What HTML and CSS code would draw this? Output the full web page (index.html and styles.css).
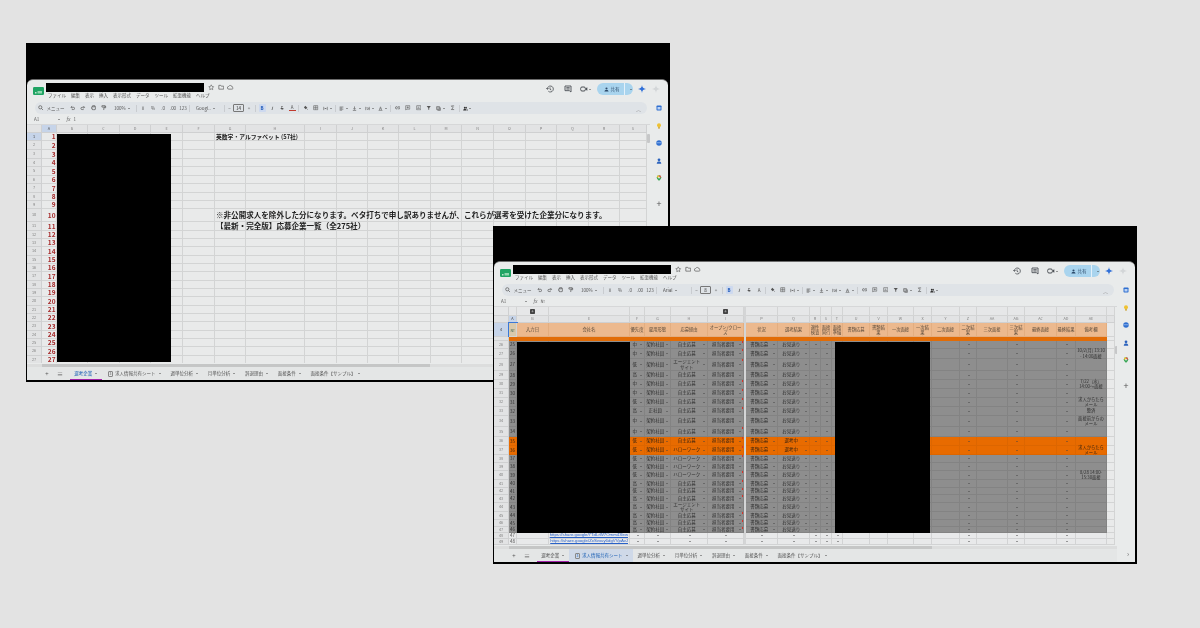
FILE: index.html
```html
<!DOCTYPE html>
<html lang="ja">
<head>
<meta charset="utf-8">
<title>応募企業一覧</title>
<link rel="stylesheet" href="styles.css">
</head>
<body>
<svg class="defs" aria-hidden="true">
  <symbol id="i-search" viewBox="0 0 24 24"><circle cx="10" cy="10" r="7" fill="none" stroke="currentColor" stroke-width="3"/><path d="M15 15l7 7" stroke="currentColor" stroke-width="3"/></symbol>
  <symbol id="i-undo" viewBox="0 0 24 24"><path d="M5 10h10a5 5 0 0 1 0 10H8M9 5l-5 5 5 5" fill="none" stroke="currentColor" stroke-width="3"/></symbol>
  <symbol id="i-redo" viewBox="0 0 24 24"><path d="M19 10H9a5 5 0 0 0 0 10h7M15 5l5 5-5 5" fill="none" stroke="currentColor" stroke-width="3"/></symbol>
  <symbol id="i-print" viewBox="0 0 24 24"><path d="M7 8V3h10v5M3 8h18v9h-4v4H7v-4H3z" fill="none" stroke="currentColor" stroke-width="3"/></symbol>
  <symbol id="i-paint" viewBox="0 0 24 24"><path d="M4 3h14v6H4zM18 6h3v6h-9v3M12 15v7" fill="none" stroke="currentColor" stroke-width="3"/></symbol>
  <symbol id="i-fill" viewBox="0 0 24 24"><path d="M10 3l9 9-7 7-8-8zM20 16c-2 3-2 5 0 5s2-2 0-5z" fill="currentColor"/></symbol>
  <symbol id="i-border" viewBox="0 0 24 24"><path d="M3 3h18v18H3zM12 3v18M3 12h18" fill="none" stroke="currentColor" stroke-width="2.5"/></symbol>
  <symbol id="i-merge" viewBox="0 0 24 24"><path d="M3 4v16M21 4v16M7 12h4M17 12h-4M9 9l3 3-3 3M15 9l-3 3 3 3" fill="none" stroke="currentColor" stroke-width="2.5"/></symbol>
  <symbol id="i-align" viewBox="0 0 24 24"><path d="M3 5h18M3 10h12M3 15h18M3 20h12" fill="none" stroke="currentColor" stroke-width="3"/></symbol>
  <symbol id="i-valign" viewBox="0 0 24 24"><path d="M12 2v14M7 11l5 5 5-5M4 21h16" fill="none" stroke="currentColor" stroke-width="3"/></symbol>
  <symbol id="i-wrap" viewBox="0 0 24 24"><path d="M3 4v16M21 4v16M6 9h9a3 3 0 0 1 0 7h-3M14 13l-3 3 3 3" fill="none" stroke="currentColor" stroke-width="2.5"/></symbol>
  <symbol id="i-rotate" viewBox="0 0 24 24"><path d="M6 20L12 4l6 16M8 14h8M3 22h18" fill="none" stroke="currentColor" stroke-width="2.5"/></symbol>
  <symbol id="i-link" viewBox="0 0 24 24"><path d="M10 7H7a5 5 0 0 0 0 10h3M14 7h3a5 5 0 0 1 0 10h-3M8 12h8" fill="none" stroke="currentColor" stroke-width="3"/></symbol>
  <symbol id="i-comment" viewBox="0 0 24 24"><path d="M3 3h18v15H8l-5 4zM12 6v9M7.500 10.500h9" fill="none" stroke="currentColor" stroke-width="2.500"/></symbol>
  <symbol id="i-chart" viewBox="0 0 24 24"><path d="M3 3h18v18H3zM8 17v-5M12 17V7M16 17v-3" fill="none" stroke="currentColor" stroke-width="2.500"/></symbol>
  <symbol id="i-filter" viewBox="0 0 24 24"><path d="M3 4h18l-7 9v8h-4v-8z" fill="currentColor"/></symbol>
  <symbol id="i-views" viewBox="0 0 24 24"><path d="M3 3h14v14H3zM21 7v14H7" fill="none" stroke="currentColor" stroke-width="3"/><path d="M6 7h8M6 12h8" stroke="currentColor" stroke-width="2"/></symbol>
  <symbol id="i-sigma" viewBox="0 0 24 24"><path d="M18 4H6l7 8-7 8h12" fill="none" stroke="currentColor" stroke-width="3"/></symbol>
  <symbol id="i-users" viewBox="0 0 24 24"><circle cx="9" cy="8" r="5"/><path d="M1 21c0-5 4-7 8-7s8 2 8 7zM15 4a4.500 4.500 0 0 1 0 9M18 14c3 1 5 3 5 7h-4"/></symbol>
  <symbol id="i-history" viewBox="0 0 24 24"><path d="M4 12a9 9 0 1 1 3 6.700M1 9l3 4 4-3M12 7v6l4 2" fill="none" stroke="currentColor" stroke-width="2.500"/></symbol>
  <symbol id="i-note" viewBox="0 0 24 24"><path d="M3 3h18v18l-5-4H3zM7 8h10M7 12h10" fill="none" stroke="currentColor" stroke-width="2.800"/></symbol>
  <symbol id="i-meet" viewBox="0 0 24 24"><rect x="2" y="6" width="14" height="12" rx="4" fill="none" stroke="currentColor" stroke-width="3"/><path d="M17 10l5-3v10l-5-3z" fill="currentColor"/></symbol>
  <symbol id="i-person" viewBox="0 0 24 24"><circle cx="12" cy="7" r="5"/><path d="M2 22c0-6 5-8 10-8s10 2 10 8z"/></symbol>
  <symbol id="i-gem" viewBox="0 0 24 24"><path d="M12 0c1 8 4 11 12 12-8 1-11 4-12 12-1-8-4-11-12-12 8-1 11-4 12-12z"/></symbol>
  <symbol id="i-star" viewBox="0 0 24 24"><path d="M12 3l3 6 6 1-4.500 4.500 1 6.500-5.500-3-5.500 3 1-6.500L3 10l6-1z" fill="none" stroke="currentColor" stroke-width="2.500"/></symbol>
  <symbol id="i-folder" viewBox="0 0 24 24"><path d="M3 5h7l2 3h9v11H3z" fill="none" stroke="currentColor" stroke-width="2.800"/></symbol>
  <symbol id="i-cloud" viewBox="0 0 24 24"><path d="M7 19a5 5 0 0 1-1-10 7 7 0 0 1 13 2 4 4 0 0 1-1 8z" fill="none" stroke="currentColor" stroke-width="2.800"/></symbol>
  <symbol id="i-cal" viewBox="0 0 24 24"><rect x="2" y="2" width="20" height="20" rx="3" fill="#2f6fd0"/><rect x="6" y="8" width="12" height="10" fill="#bcd3f5"/></symbol>
  <symbol id="i-keep" viewBox="0 0 24 24"><circle cx="12" cy="9" r="8" fill="#efc233"/><rect x="8" y="17" width="8" height="5" fill="#c9a02c"/></symbol>
  <symbol id="i-tasks" viewBox="0 0 24 24"><circle cx="12" cy="12" r="11" fill="#2f6fd0"/><path d="M2 11h20" stroke="#a9c6f2" stroke-width="3"/></symbol>
  <symbol id="i-contact" viewBox="0 0 24 24"><circle cx="12" cy="7" r="5.500" fill="#2a62bd"/><path d="M3 23c0-7 4-9 9-9s9 2 9 9z" fill="#2a62bd"/></symbol>
  <symbol id="i-map" viewBox="0 0 24 24"><path d="M12 1a9 9 0 0 1 9 9c0 6-9 13-9 13S3 16 3 10a9 9 0 0 1 9-9z" fill="#3aa757"/><path d="M12 1a9 9 0 0 1 9 9l-9 0z" fill="#e2574c"/><path d="M3 10a9 9 0 0 1 9-9v9z" fill="#f0c330"/><circle cx="12" cy="10" r="3.500" fill="#eee"/></symbol>
</svg>

<section class="win win-a">
  <div class="sheet">
    <header class="head">
      <div class="head-left">
        <svg class="logo" viewBox="0 0 22 16"><rect width="22" height="16" rx="2.500" fill="#20a464"/><path d="M9 8h9v5H9z" fill="#8fd6ae"/><path d="M4 10h3v3H4z" fill="#bfe8cf"/></svg>
        <div class="head-text">
          <div class="doc-row">
            <div class="redact doc-name"></div>
            <svg class="ic7"><use href="#i-star"/></svg>
            <svg class="ic7"><use href="#i-folder"/></svg>
            <svg class="ic7"><use href="#i-cloud"/></svg>
          </div>
          <nav class="menu"><span>ファイル</span><span>編集</span><span>表示</span><span>挿入</span><span>表示形式</span><span>データ</span><span>ツール</span><span>拡張機能</span><span>ヘルプ</span></nav>
        </div>
      </div>
      <div class="head-right">
        <svg class="ic8"><use href="#i-history"/></svg>
        <svg class="ic8 ml10"><use href="#i-note"/></svg>
        <svg class="ic8 ml8"><use href="#i-meet"/></svg><i class="caret"></i>
        <div class="share"><svg class="ic5"><use href="#i-person"/></svg><span>共有</span><b class="share-sep"></b><i class="caret"></i></div>
        <svg class="ic8 gem"><use href="#i-gem"/></svg>
        <svg class="ic8 faint"><use href="#i-gem"/></svg>
      </div>
    </header>
    <div class="body">
      <main class="app">
        <div class="toolbar">
          <svg class="t s8"><use href="#i-search"/></svg><span class="lbl">メニュー</span>
          <svg class="t ml2"><use href="#i-undo"/></svg><svg class="t"><use href="#i-redo"/></svg><svg class="t"><use href="#i-print"/></svg><svg class="t"><use href="#i-paint"/></svg>
          <span class="zoomv">100% <i class="caret"></i></span><b class="sep"></b>
          <span class="tx">¥</span><span class="tx">%</span><span class="tx">.0</span><span class="tx">.00</span><span class="tx">123</span><b class="sep"></b>
          <span class="font">Googl.. <i class="caret"></i></span><b class="sep"></b>
          <span class="tx tx8">−</span><span class="size">14</span><span class="tx">+</span><b class="sep"></b>
          <span class="tx bold">B</span><span class="tx ital">I</span><span class="tx strike">S</span><span class="tx acolor">A</span><b class="sep"></b>
          <svg class="t"><use href="#i-fill"/></svg><svg class="t"><use href="#i-border"/></svg><span class="tc"><svg class="ic5"><use href="#i-merge"/></svg><i class="caret"></i></span><b class="sep"></b>
          <span class="tc"><svg class="ic5"><use href="#i-align"/></svg><i class="caret"></i></span><span class="tc"><svg class="ic5"><use href="#i-valign"/></svg><i class="caret"></i></span><span class="tc"><svg class="ic5"><use href="#i-wrap"/></svg><i class="caret"></i></span><span class="tc"><svg class="ic5"><use href="#i-rotate"/></svg><i class="caret"></i></span><b class="sep"></b>
          <svg class="t"><use href="#i-link"/></svg><svg class="t"><use href="#i-comment"/></svg><svg class="t"><use href="#i-chart"/></svg><svg class="t"><use href="#i-filter"/></svg><span class="tc"><svg class="ic5"><use href="#i-views"/></svg><i class="caret"></i></span><svg class="t"><use href="#i-sigma"/></svg><b class="sep"></b>
          <span class="tc"><svg class="ic5 dark"><use href="#i-users"/></svg><i class="caret"></i></span>
          <span class="collapse">︿</span>
        </div>
        <div class="formula"><span class="ref">A1</span><i class="caret"></i><em>fx</em><span>1</span></div>
        <div class="grid-wrap">
          <div class="grid grid-a" id="gridA"></div>
          <div class="redact red-a"></div>
          <div class="thumb thumb-a"></div>
        </div>
        <div class="hscroll"><div class="hthumb hthumb-a"></div></div>
        <div class="tabs">
          <span class="tab-tool">+</span><span class="tab-tool tool2">≡</span>
          <span class="tab tab-on"><span>選考企業</span><i class="caret"></i></span>
          <span class="tab"><b class="badge">3</b><span>求人情報共有シート</span><i class="caret"></i></span>
          <span class="tab"><span>週単位分析</span><i class="caret"></i></span>
          <span class="tab"><span>月単位分析</span><i class="caret"></i></span>
          <span class="tab"><span>辞退理由</span><i class="caret"></i></span>
          <span class="tab"><span>面接条件</span><i class="caret"></i></span>
          <span class="tab"><span>面接条件【サンプル】</span><i class="caret"></i></span>
        </div>
      </main>
      <aside class="side">
        <svg class="ic6"><use href="#i-cal"/></svg><svg class="ic6"><use href="#i-keep"/></svg><svg class="ic6"><use href="#i-tasks"/></svg><svg class="ic6"><use href="#i-contact"/></svg><svg class="ic6"><use href="#i-map"/></svg>
        <span class="side-plus">+</span><span class="side-arrow">›</span>
      </aside>
    </div>
  </div>
</section>

<section class="win win-b">
  <div class="sheet">
    <header class="head">
      <div class="head-left">
        <svg class="logo" viewBox="0 0 22 16"><rect width="22" height="16" rx="2.500" fill="#20a464"/><path d="M9 8h9v5H9z" fill="#8fd6ae"/><path d="M4 10h3v3H4z" fill="#bfe8cf"/></svg>
        <div class="head-text">
          <div class="doc-row">
            <div class="redact doc-name"></div>
            <svg class="ic7"><use href="#i-star"/></svg>
            <svg class="ic7"><use href="#i-folder"/></svg>
            <svg class="ic7"><use href="#i-cloud"/></svg>
          </div>
          <nav class="menu"><span>ファイル</span><span>編集</span><span>表示</span><span>挿入</span><span>表示形式</span><span>データ</span><span>ツール</span><span>拡張機能</span><span>ヘルプ</span></nav>
        </div>
      </div>
      <div class="head-right">
        <svg class="ic8"><use href="#i-history"/></svg>
        <svg class="ic8 ml10"><use href="#i-note"/></svg>
        <svg class="ic8 ml8"><use href="#i-meet"/></svg><i class="caret"></i>
        <div class="share"><svg class="ic5"><use href="#i-person"/></svg><span>共有</span><b class="share-sep"></b><i class="caret"></i></div>
        <svg class="ic8 gem"><use href="#i-gem"/></svg>
        <svg class="ic8 faint"><use href="#i-gem"/></svg>
      </div>
    </header>
    <div class="body">
      <main class="app">
        <div class="toolbar">
          <svg class="t s8"><use href="#i-search"/></svg><span class="lbl">メニュー</span>
          <svg class="t ml2"><use href="#i-undo"/></svg><svg class="t"><use href="#i-redo"/></svg><svg class="t"><use href="#i-print"/></svg><svg class="t"><use href="#i-paint"/></svg>
          <span class="zoomv">100% <i class="caret"></i></span><b class="sep"></b>
          <span class="tx">¥</span><span class="tx">%</span><span class="tx">.0</span><span class="tx">.00</span><span class="tx">123</span><b class="sep"></b>
          <span class="font">Arial <i class="caret"></i></span><b class="sep"></b>
          <span class="tx tx8">−</span><span class="size">8</span><span class="tx">+</span><b class="sep"></b>
          <span class="tx bold">B</span><span class="tx ital">I</span><span class="tx strike">S</span><span class="tx">A</span><b class="sep"></b>
          <svg class="t"><use href="#i-fill"/></svg><svg class="t"><use href="#i-border"/></svg><span class="tc"><svg class="ic5"><use href="#i-merge"/></svg><i class="caret"></i></span><b class="sep"></b>
          <span class="tc"><svg class="ic5"><use href="#i-align"/></svg><i class="caret"></i></span><span class="tc"><svg class="ic5"><use href="#i-valign"/></svg><i class="caret"></i></span><span class="tc"><svg class="ic5"><use href="#i-wrap"/></svg><i class="caret"></i></span><span class="tc"><svg class="ic5"><use href="#i-rotate"/></svg><i class="caret"></i></span><b class="sep"></b>
          <svg class="t"><use href="#i-link"/></svg><svg class="t"><use href="#i-comment"/></svg><svg class="t"><use href="#i-chart"/></svg><svg class="t"><use href="#i-filter"/></svg><span class="tc"><svg class="ic5"><use href="#i-views"/></svg><i class="caret"></i></span><svg class="t"><use href="#i-sigma"/></svg><b class="sep"></b>
          <span class="tc"><svg class="ic5 dark"><use href="#i-users"/></svg><i class="caret"></i></span>
          <span class="collapse">︿</span>
        </div>
        <div class="formula"><span class="ref">A1</span><i class="caret"></i><em>fx</em><span>№</span></div>
        <div class="grid-wrap">
          <div class="grid grid-b" id="gridB"></div>
          <div class="redact red-b1"></div>
          <div class="redact red-b2"></div>
          <div class="thumb thumb-b"></div>
        </div>
        <div class="hscroll"><div class="hthumb hthumb-b"></div></div>
        <div class="tabs">
          <span class="tab-tool">+</span><span class="tab-tool tool2">≡</span>
          <span class="tab tab-line"><span>選考企業</span><i class="caret"></i></span>
          <span class="tab tab-hi"><b class="badge">3</b><span>求人情報共有シート</span><i class="caret"></i></span>
          <span class="tab"><span>週単位分析</span><i class="caret"></i></span>
          <span class="tab"><span>月単位分析</span><i class="caret"></i></span>
          <span class="tab"><span>辞退理由</span><i class="caret"></i></span>
          <span class="tab"><span>面接条件</span><i class="caret"></i></span>
          <span class="tab"><span>面接条件【サンプル】</span><i class="caret"></i></span>
        </div>
      </main>
      <aside class="side">
        <svg class="ic6"><use href="#i-cal"/></svg><svg class="ic6"><use href="#i-keep"/></svg><svg class="ic6"><use href="#i-tasks"/></svg><svg class="ic6"><use href="#i-contact"/></svg><svg class="ic6"><use href="#i-map"/></svg>
        <span class="side-plus">+</span><span class="side-arrow">›</span>
      </aside>
    </div>
  </div>
</section>
<script src="app.js"></script>
</body>
</html>
```

FILE: styles.css
```css
* { box-sizing: border-box; }
html, body { margin: 0; height: 100%; }
body {
  width: 1200px; height: 628px; position: relative; overflow: hidden;
  background: #e3e3e3;
  font-family: "Noto Sans CJK JP", "Liberation Sans", sans-serif;
  font-size: 4.5px; line-height: 1; color: #555;
}
.defs { position: absolute; width: 0; height: 0; }
svg { display: block; flex: none; }
i, em { font-style: normal; }

.win {
  position: absolute; left: 26px; width: 644px;
  background: #000; padding: 0 2px 2px 1px;
  display: flex; filter: blur(.5px);
}
.win-a { top: 43px; height: 339px; padding-top: 36px; }
.win-b { top: 226px; left: 493px; height: 338px; padding-top: 35px; }
.sheet {
  flex: 1; display: flex; flex-direction: column; min-width: 0;
  background: #e9ebeb; border-radius: 6px 6px 0 0;
  border-top: 1px solid #6b6b6b;
}
.redact { background: #000; }

/* header */
.head { height: 20px; flex: none; display: flex; justify-content: space-between; color: #666; }
.head-left { display: flex; padding-left: 6px; }
.logo { width: 11px; height: 8px; margin-top: 7px; }
.head-text { margin-left: 2px; padding-top: 3px; }
.doc-row { display: flex; align-items: center; gap: 3px; }
.doc-name { width: 158px; height: 9px; margin-right: 1px; }
.ic7 { width: 6.500px; height: 6.500px; color: #666; }
.ic8 { width: 8px; height: 8px; color: #4f5358; }
.ic6 { width: 6px; height: 6px; }
.ic5 { width: 5px; height: 5px; color: #555; }
.dark { color: #333; fill: #333; }
.menu { display: flex; gap: 5px; padding: 1px 0 0 2px; height: 6px; color: #555; }
.head-right { display: flex; align-items: center; height: 12px; margin-top: 3px; padding-right: 8px; }
.ml10 { margin-left: 10px; }
.ml8 { margin-left: 8px; }
.caret {
  flex: none; display: inline-block; width: 0; height: 0;
  border-left: 1.500px solid transparent; border-right: 1.500px solid transparent;
  border-top: 1.800px solid #444; margin-left: 1.500px; vertical-align: middle;
}
.share {
  width: 36px; height: 12px; margin-left: 6px; border-radius: 6px; background: #a9d4ee;
  display: flex; align-items: center; padding-left: 7px; gap: 1.500px; color: #2c4a6a;
}
.share .ic5 { fill: #2c4a6a; color: #2c4a6a; }
.share-sep { width: 1px; height: 12px; background: #e4f1fa; margin-left: 3px; margin-right: 2px; }
.gem { margin-left: 5px; fill: #2f6fd8; }
.faint { margin-left: 6px; fill: #d3d6d8; }

/* body */
.body { flex: 1; display: flex; min-height: 0; }
.app { flex: 1; min-width: 0; display: flex; flex-direction: column; }
.side {
  width: 18px; flex: none; display: flex; flex-direction: column; align-items: center;
  padding-top: 5px; gap: 11.500px; position: relative;
}
.side-plus { font-size: 9px; color: #555; margin-top: 6px; }
.side-arrow { font-size: 7px; color: #666; margin-top: auto; margin-bottom: 5px; margin-left: 4px; }

/* toolbar */
.toolbar {
  height: 12px; margin: 2px 3px 1px 8px; flex: none; border-radius: 6px; background: #dfe3e7;
  display: flex; align-items: center; padding-left: 1px; color: #555; fill: #555;
}
.t { width: 5.500px; height: 5.500px; margin: 0 2.500px; flex: none; color: #555; }
.t.s8 { margin: 0 1px 0 2px; }
.t.ml2 { margin-left: 4px; }
.lbl { width: 21px; padding-left: 2px; flex: none; }
.zoomv { width: 26px; flex: none; padding-left: 5px; }
.sep { width: 1px; height: 7px; background: #c9ccd0; flex: none; margin: 0 1px; }
.tx { width: 10px; flex: none; text-align: center; }
.tx8 { width: 7px; }
.font { width: 32px; padding-left: 5px; flex: none; }
.size { width: 11px; height: 7.500px; flex: none; border: .7px solid #777; border-radius: 1px; text-align: center; line-height: 6px; color: #333; }
.bold { font-weight: 700; color: #1a56b8; background: #cdd9ef; height: 8px; line-height: 8px; width: 7px; margin: 0 1.500px; border-radius: 1px; }
.ital { font-style: italic; font-weight: 700; }
.strike { text-decoration: line-through; }
.acolor { border-bottom: 1.500px solid #c03a2e; line-height: 5px; width: 7px; margin: 0 1.500px; }
.tc { width: 13px; flex: none; display: flex; align-items: center; padding-left: 2px; }
.collapse { margin-left: auto; margin-right: 6px; font-size: 5px; color: #777; }

/* formula */
.formula {
  height: 10px; flex: none; display: flex; align-items: center; padding-left: 7px;
  border-bottom: 1px solid #d6d7d8; color: #666;
}
.ref { width: 22px; }
.formula em { margin: 0 3px 0 7px; font-style: italic; font-family: "Liberation Serif", serif; font-size: 5.500px; }

/* grids */
.grid-wrap { height: 238px; flex: none; position: relative; overflow: hidden; }
.grid { display: grid; }
.grid-a {
  grid-template-columns: 15px 15px 31px 32px 31px 32px 32px 31px 59px 32px 31px 31px 32px 31px 32px 32px 31px 32px 31px 27px;
  grid-template-rows: 8px 8px 9px 9px 8px 9px 8px 9px 8px 8px 13px 9px 8px 8px 9px 8px 8px 9px 8px 8px 9px 8px 8px 9px 8px 8px 9px 8px;
}
.grid-b {
  grid-template-columns: 15px 8px 32px 81px 15px 26px 37px 36px 2px 32px 32px 11px 11px 11px 27px 18px 26px 18px 28px 17px 31px 17px 32px 19px 31px 8px;
  grid-template-rows: 9px 7px 14px 4px 8px 10px 12px 9px 9px 9px 9px 9px 11px 10px 9px 9px 8px 8px 9px 8px 7px 8px 9px 8px 7px 6px 6px 6px;
}
.c {
  min-width: 0; display: flex; align-items: center; justify-content: center; position: relative;
  border-right: 1px solid #d3d4d4; border-bottom: 1px solid #d3d4d4;
  background: #e9eaea; color: #444; white-space: nowrap;
}
.c.h { background: #e2e3e4; color: #808080; font-size: 3.800px; border-color: #cfd0d1; }
.c.hsel { background: #c6d4e9; color: #444; }
.c.num { justify-content: flex-end; color: #a52a2a; font-weight: 700; font-size: 6.500px; padding-right: .5px; }
.c.over { justify-content: flex-start; overflow: visible; z-index: 1; color: #222; font-weight: 700; padding-left: 1px; }
.c.t1 { font-size: 5.800px; }
.c.t2 { font-size: 7.550px; }

.c.top { background: #e6e7e8; }
.c.tan { background: #ecb98e; border-color: #e3ae80; color: #5a4a3a; white-space: normal; text-align: center; font-size: 4.300px; line-height: 5px; }
.c.no { background: #d9c9ab; color: #2a5a4a; outline: .8px solid #3a78d8; outline-offset: -.8px; font-size: 4px; }
.c.bar { background: #e26c06; border: 0; }
.c.g { background: #8e8e8e; border-color: #838383; color: #2f2f2f; }
.c.o { background: #e86b00; border-color: #dd6600; color: #3a2410; }
.c.w { background: #e8e9ea; border-color: #d2d3d4; color: #555; }
.c.tail { background: #e9eaea; }
.c.fz { background: #d4d5d6; border: 0; }
.c.val { justify-content: space-between; padding: 0 2px 0 1px; }
.c.val > span { flex: 1; text-align: center; white-space: normal; line-height: 5.500px; }
.c.rem { white-space: normal; text-align: center; line-height: 5.500px; font-size: 4.300px; padding: 0 1px; }
.c.lnk { color: #2a62c8; text-decoration: underline; font-family: "Liberation Sans", sans-serif; font-size: 4.300px; justify-content: flex-end; padding-right: 1px; }
.note::after { content: ""; position: absolute; right: 0; top: 0; width: 1.500px; height: 1.500px; background: #d8322a; }
.grp { width: 5px; height: 5px; background: #444; border-radius: .8px; color: #ddd; font-size: 4.500px; line-height: 4.500px; text-align: center; font-style: normal; }

/* overlays on the grids */
.red-a { position: absolute; left: 30px; top: 9px; width: 114px; height: 228px; }
.red-b1 { position: absolute; left: 23px; top: 35px; width: 113px; height: 191px; }
.red-b2 { position: absolute; left: 341px; top: 35px; width: 95px; height: 191px; }
.thumb { position: absolute; width: 3px; background: #c6c7c8; border-radius: 1px; }
.thumb-a { left: 620px; top: 9px; height: 9px; }
.thumb-b { left: 621px; top: 39px; height: 8px; }

.hscroll { height: 4px; flex: none; background: #dcdddd; border-top: 1px solid #e9ebeb; }
.hthumb { height: 3px; background: #c5c6c6; margin-left: 15px; }
.hthumb-a { width: 388px; }
.hthumb-b { width: 423px; }

/* sheet tabs */
.tabs { flex: 1; min-height: 0; display: flex; align-items: center; padding-left: 17px; color: #555; background: #e4e6e6; }
.tab-tool { width: 6px; text-align: center; font-size: 6px; color: #555; }
.tool2 { margin: 0 6.500px 0 7px; }
.tab { height: 100%; display: flex; align-items: center; padding: 0 5px 0 4.800px; font-size: 4.500px; }
.tab .caret { margin-left: 3px; }
.badge { width: 5px; height: 6px; border: .6px solid #888; border-radius: 1px; font-size: 3.500px; line-height: 4.500px; text-align: center; margin: 0 2px 0 1px; font-weight: 400; }
.tab-on { color: #1a5fb4; border-bottom: 1.500px solid #a21fa8; }
.tab-line { border-bottom: 1.500px solid #a21fa8; }
.tab-hi { background: #cfd9e8; color: #1a5fb4; }
```

FILE: app.js
```javascript
function cell(parent, cls, html) {
  var d = document.createElement('div');
  d.className = 'c ' + cls;
  if (html) d.innerHTML = html;
  parent.appendChild(d);
  return d;
}

/* upper window */
(function () {
  var g = document.getElementById('gridA');
  var letters = 'ABCDEFGHIJKLMNOPQRS'.split('');
  cell(g, 'h', '');
  letters.forEach(function (l, i) { cell(g, 'h' + (i === 0 ? ' hsel' : ''), l); });
  var texts = {
    1: ['t1', '英数字・アルファベット (57社)'],
    10: ['t2', '※非公開求人を除外した分になります。ベタ打ちで申し訳ありませんが、これらが選考を受けた企業分になります。'],
    11: ['t2', '【最新・完全版】応募企業一覧（全275社）']
  };
  for (var r = 1; r <= 27; r++) {
    cell(g, 'h' + (r === 1 ? ' hsel' : ''), String(r));
    cell(g, 'num', String(r));
    for (var c = 1; c < letters.length; c++) {
      if (c === 6 && texts[r]) cell(g, 'over ' + texts[r][0], texts[r][1]);
      else cell(g, '');
    }
  }
})();

/* lower window */
(function () {
  var g = document.getElementById('gridB');
  var letters = ['A','B','E','F','G','H','I','','P','Q','R','S','T','U','V','W','X','Y','Z','AA','AB','AC','AD','AE',''];
  var heads = ['№','入力日','会社名','優先度','雇用形態','応募経由','オープン/クローズ','','状況','選考結果','適性検査','面接同行','面接準備','書類応募','書類結果','一次面接','一次結果','二次面接','二次結果','三次面接','三次結果','最終面接','最終結果','備考欄',''];
  var FZ = 7, TAIL = 24;

  cell(g, 'h top', '');
  letters.forEach(function (l, i) {
    if (i === FZ) cell(g, 'fz', '');
    else if (i === 1 || i === 6) cell(g, 'top', '<i class="grp">+</i>');
    else cell(g, 'top', '');
  });
  cell(g, 'h', '');
  letters.forEach(function (l, i) {
    if (i === FZ) cell(g, 'fz', '');
    else cell(g, 'h' + (i === 0 ? ' hsel' : ''), l);
  });
  cell(g, 'h hsel', '4');
  heads.forEach(function (t, i) {
    if (i === FZ) cell(g, 'fz', '');
    else if (i === TAIL) cell(g, 'tail', '');
    else cell(g, i === 0 ? 'no' : 'tan', t);
  });
  cell(g, 'h', '');
  heads.forEach(function (t, i) {
    if (i === FZ) cell(g, 'fz', '');
    else if (i === TAIL) cell(g, 'tail', '');
    else cell(g, 'bar', '');
  });

  var AG = 'エージェント<br>サイト', HW = 'ハローワーク', SE = '自主応募';
  var R = [
    ['中','契約社員',SE],['中','契約社員',SE,'10/2(月) 13:10<br>- 14:00面接'],['低','契約社員',AG],
    ['高','契約社員',SE],['中','契約社員',SE,'7/22（水）<br>14:00〜面接'],['中','契約社員',SE],
    ['低','契約社員',SE,'求人からたら<br>メール'],['高','正社員',SE,'整済'],['中','契約社員',SE,'面接前からの<br>メール'],
    ['中','契約社員',SE],['低','契約社員',SE],['低','契約社員',HW,'求人からたら<br>メール'],
    ['低','契約社員',HW],['低','契約社員',HW],['低','契約社員',HW,'8/28 14:00-<br>15:30面接'],
    ['高','契約社員',SE],['低','契約社員',SE],['高','契約社員',SE],
    ['高','契約社員',AG],['高','契約社員',SE],['高','契約社員',SE],['高','契約社員',SE]
  ];
  var caretCols = { 3: 1, 4: 1, 5: 1, 6: 1, 8: 1, 9: 1, 10: 1, 11: 1, 12: 1, 18: 1, 20: 1, 22: 1 };
  var CARET = '<i class="caret"></i>';

  function valCell(kind, txt, note) {
    return cell(g, kind + ' val' + (note ? ' note' : ''), '<span>' + txt + '</span>' + CARET);
  }

  R.forEach(function (row, n) {
    var k = (n === 10 || n === 11) ? 'o' : 'g';
    var sel = (n === 10 || n === 11) ? '選考中' : 'お見送り';
    cell(g, 'h', String(n + 26));
    heads.forEach(function (_, i) {
      if (i === FZ) cell(g, 'fz', '');
      else if (i === TAIL) cell(g, 'tail', '');
      else if (i === 0) cell(g, k, String(n + 25));
      else if (i === 3) valCell(k, row[0]);
      else if (i === 4) valCell(k, row[1]);
      else if (i === 5) valCell(k, row[2]);
      else if (i === 6) valCell(k, '担当者要用', n % 5 !== 3);
      else if (i === 8) valCell(k, '書類応募');
      else if (i === 9) valCell(k, sel);
      else if (i === 23) cell(g, k + ' rem', row[3] || '');
      else if (caretCols[i]) cell(g, k, CARET);
      else cell(g, k, '');
    });
  });

  var links = ['https://share.google/7TdLrW7Omm43lew', 'https://share.google/ZxSvxuy6dgVVpAvJ'];
  links.forEach(function (url, n) {
    cell(g, 'h', String(n + 48));
    heads.forEach(function (_, i) {
      if (i === FZ) cell(g, 'fz', '');
      else if (i === TAIL) cell(g, 'tail', '');
      else if (i === 0) cell(g, 'w', String(n + 47));
      else if (i === 2) cell(g, 'w lnk', url);
      else if (caretCols[i]) cell(g, 'w', CARET);
      else cell(g, 'w', '');
    });
  });
})();
```
